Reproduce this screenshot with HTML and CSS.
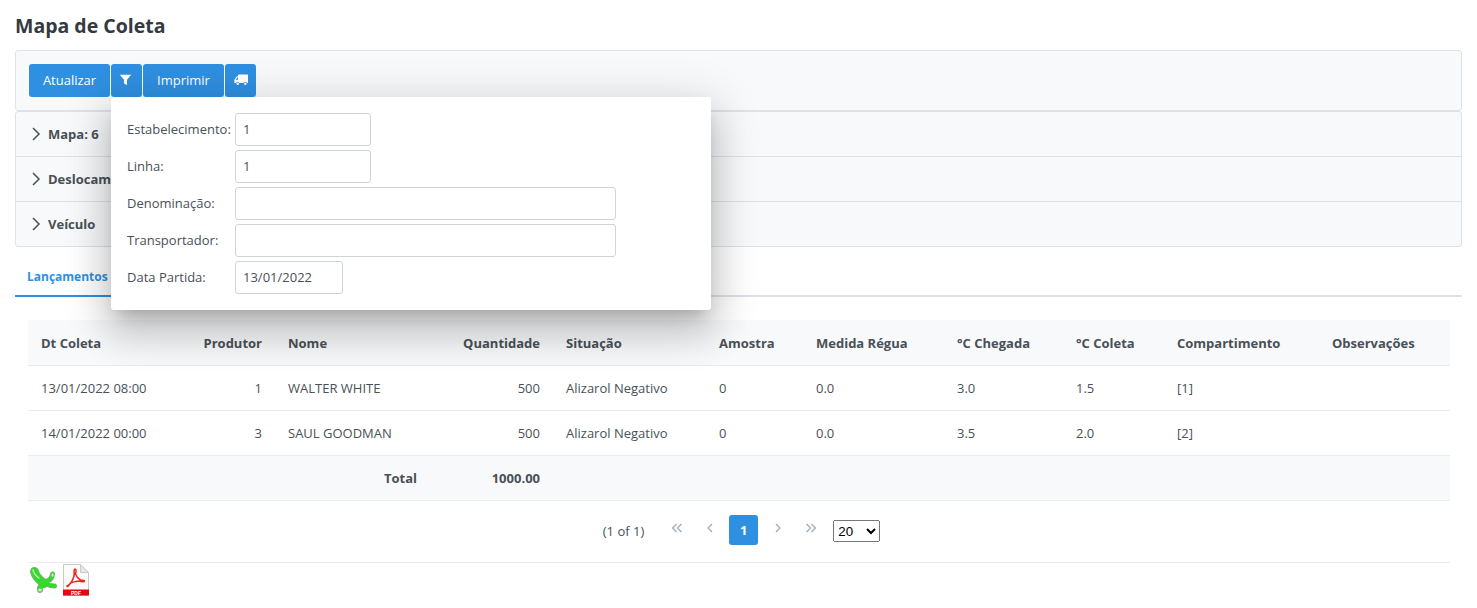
FILE: index.html
```html
<!DOCTYPE html>
<html lang="pt-BR">
<head>
    <meta charset="UTF-8">
    <meta name="viewport" content="width=device-width, initial-scale=1.0">
    <title>Mapa de Coleta</title>
    <link rel="stylesheet" href="styles.css">
</head>
<body>

<h1 class="page-title">Mapa de Coleta</h1>

<div class="toolbar">
    <button class="btn btn-text">Atualizar</button>
    <div class="filter-wrap">
        <button class="btn btn-icon" aria-label="Filtro">
            <svg width="13" height="13" viewBox="1 0 13 13"><path d="M.8 1.800h11.400L8 6.800V12L5 10.400V6.800z" fill="#fff"/></svg>
        </button>
        <div class="filter-panel">
            <div class="form-row">
                <label>Estabelecimento:</label>
                <input class="input-sm" type="text" value="1">
            </div>
            <div class="form-row">
                <label>Linha:</label>
                <input class="input-sm" type="text" value="1">
            </div>
            <div class="form-row">
                <label>Denominação:</label>
                <input class="input-lg" type="text">
            </div>
            <div class="form-row">
                <label>Transportador:</label>
                <input class="input-lg" type="text">
            </div>
            <div class="form-row">
                <label>Data Partida:</label>
                <input class="input-date" type="text" value="13/01/2022">
            </div>
        </div>
    </div>
    <button class="btn btn-text">Imprimir</button>
    <button class="btn btn-icon" aria-label="Transporte">
        <svg width="14" height="12" viewBox="0 0 14 12"><path d="M5 .500h8.300c.4 0 .7.300.7.700V9h-1.100a1.700 1.700 0 0 0-3.300 0H5.300a1.700 1.700 0 0 0-3.300 0H.3V5.800L2.300 3.100C2.700 2.500 3.100 2.300 4 2.300V1.500c0-.6.400-1 1-1zM1.700 5.700H4V3.400H3.300z" fill="#fff" fill-rule="evenodd"/><circle cx="3.700" cy="9.700" r="1.300" fill="#fff"/><circle cx="11.300" cy="9.700" r="1.300" fill="#fff"/></svg>
    </button>
</div>

<div class="accordion">
    <div class="acc-row">
        <svg class="chevron" width="10" height="14" viewBox="0 0 10 14"><path d="M2 1l6 6-6 6" fill="none" stroke="#495057" stroke-width="1.500"/></svg>
        <span>Mapa: 6</span>
    </div>
    <div class="acc-row">
        <svg class="chevron" width="10" height="14" viewBox="0 0 10 14"><path d="M2 1l6 6-6 6" fill="none" stroke="#495057" stroke-width="1.500"/></svg>
        <span>Deslocamento</span>
    </div>
    <div class="acc-row">
        <svg class="chevron" width="10" height="14" viewBox="0 0 10 14"><path d="M2 1l6 6-6 6" fill="none" stroke="#495057" stroke-width="1.500"/></svg>
        <span>Veículo</span>
    </div>
</div>

<div class="tabs">
    <a class="tab active">Lançamentos</a>
</div>

<div class="tab-content">
    <table class="data-table">
        <colgroup>
            <col class="c-data"><col class="c-prod"><col class="c-nome"><col class="c-qtd"><col class="c-sit">
            <col class="c-amo"><col class="c-med"><col class="c-che"><col class="c-col"><col class="c-comp"><col class="c-obs">
        </colgroup>
        <thead>
            <tr>
                <th>Dt Coleta</th>
                <th class="right">Produtor</th>
                <th>Nome</th>
                <th class="right">Quantidade</th>
                <th>Situação</th>
                <th>Amostra</th>
                <th>Medida Régua</th>
                <th>°C Chegada</th>
                <th>°C Coleta</th>
                <th>Compartimento</th>
                <th>Observações</th>
            </tr>
        </thead>
        <tbody>
            <tr>
                <td>13/01/2022 08:00</td>
                <td class="right">1</td>
                <td>WALTER WHITE</td>
                <td class="right">500</td>
                <td>Alizarol Negativo</td>
                <td>0</td>
                <td>0.0</td>
                <td>3.0</td>
                <td>1.5</td>
                <td>[1]</td>
                <td></td>
            </tr>
            <tr>
                <td>14/01/2022 00:00</td>
                <td class="right">3</td>
                <td>SAUL GOODMAN</td>
                <td class="right">500</td>
                <td>Alizarol Negativo</td>
                <td>0</td>
                <td>0.0</td>
                <td>3.5</td>
                <td>2.0</td>
                <td>[2]</td>
                <td></td>
            </tr>
        </tbody>
        <tfoot>
            <tr>
                <td class="right" colspan="3">Total</td>
                <td class="right">1000.00</td>
                <td colspan="7"></td>
            </tr>
        </tfoot>
    </table>

    <div class="paginator">
        <span class="page-info">(1 of 1)</span>
        <button class="page-link" aria-label="Primeira">
            <svg width="12" height="10" viewBox="0 0 12 10"><path d="M5.500 1L1.500 5l4 4M10.500 1l-4 4 4 4" fill="none" stroke="#a3acb5" stroke-width="1.300"/></svg>
        </button>
        <button class="page-link" aria-label="Anterior">
            <svg width="12" height="10" viewBox="0 0 12 10"><path d="M8 1L4 5l4 4" fill="none" stroke="#a3acb5" stroke-width="1.300"/></svg>
        </button>
        <button class="page-num">1</button>
        <button class="page-link" aria-label="Próxima">
            <svg width="12" height="10" viewBox="0 0 12 10"><path d="M4 1l4 4-4 4" fill="none" stroke="#a3acb5" stroke-width="1.300"/></svg>
        </button>
        <button class="page-link" aria-label="Última">
            <svg width="12" height="10" viewBox="0 0 12 10"><path d="M1.500 1l4 4-4 4M6.500 1l4 4-4 4" fill="none" stroke="#a3acb5" stroke-width="1.300"/></svg>
        </button>
        <select class="page-size">
            <option>20</option>
        </select>
    </div>

    <div class="exports">
        <svg class="icon-excel" width="30" height="30" viewBox="0 0 30 30">
            <g fill="none" stroke="#8aa886" stroke-linecap="round">
                <path d="M6.500 6.500C8 13 12 15 16 18.500" stroke-width="9"/>
                <path d="M16 17C20 16 24 15 24.500 9" stroke-width="5"/>
                <path d="M17 18C20 20 23 21 26.500 21" stroke-width="5"/>
                <path d="M15 18C14 21 11 22 12 25" stroke-width="6"/>
            </g>
            <g fill="none" stroke="#35d92b" stroke-linecap="round">
                <path d="M6.500 6.500C8 13 12 15 16 18.500" stroke-width="7.500"/>
                <path d="M16 17C20 16 24 15 24.500 9" stroke-width="3.800"/>
                <path d="M17 18C20 20 23 21 26.500 21" stroke-width="3.800"/>
                <path d="M15 18C14 21 11 22 12 25" stroke-width="4.500"/>
            </g>
            <path d="M5 5c1 4 3 6 6 8" fill="none" stroke="#b5f5ad" stroke-width="1.500" stroke-linecap="round"/>
            <ellipse cx="12" cy="25" rx="1.800" ry="1.400" fill="#d8f8d4"/>
            <ellipse cx="24.500" cy="10" rx="1.100" ry="1.800" fill="#d8f8d4"/>
        </svg>
        <svg width="26" height="32" viewBox="0 0 26 32">
            <path d="M.5.500h17l8 8v23H.5z" fill="#fbfbfb" stroke="#c9c9c9"/>
            <path d="M17.500.500v8h8z" fill="#e6e6e6" stroke="#c9c9c9"/>
            <path d="M4 22c3-1 6-6 7-10 .5-3-.5-7 1-7s1 3 .5 5c1 3 3 5 5 6 2 0 4 0 4 1s-3 1-5 0c-3 0-6 1-9 2-2 3-3.500 4.500-3.500 3z" fill="none" stroke="#e8281d" stroke-width="1.500"/>
            <rect x="0" y="25.500" width="26" height="6" fill="#e30613"/>
            <text class="pdf-label" x="13" y="30.500">PDF</text>
        </svg>
    </div>
</div>

</body>
</html>
```

FILE: styles.css
```css
* {
    box-sizing: border-box;
}
body {
    font-family: "Open Sans", sans-serif;
    font-size: 13px;
    color: #495057;
    background-color: #fff;
    margin: 0;
    padding: 0 15px;
}
.page-title {
    font-size: 19.500px;
    line-height: 27px;
    font-weight: 700;
    color: #343a40;
    margin: 0;
    padding: 12px 0 11px;
}
.toolbar {
    display: flex;
    gap: 1px;
    height: 61px;
    padding: 13px;
    background: #f8f9fa;
    border: 1px solid #dee2e6;
    border-radius: 3px;
}
.btn {
    height: 33px;
    border: none;
    border-radius: 3px;
    background-color: #2f8fe0;
    color: #fff;
    font-family: inherit;
    font-size: 13px;
    padding: 0 0 2px;
    display: flex;
    align-items: center;
    justify-content: center;
}
.btn-text {
    width: 81px;
}
.btn-icon {
    width: 31px;
}
.filter-wrap {
    position: relative;
}
.filter-panel {
    position: absolute;
    top: 33px;
    left: 0;
    z-index: 10;
    width: 600px;
    padding: 16px;
    display: flex;
    flex-direction: column;
    gap: 4px;
    background: #fff;
    border-radius: 3px;
    box-shadow: 0 11px 15px -7px rgba(0, 0, 0, 0.2), 0 24px 38px 3px rgba(0, 0, 0, 0.14), 0 9px 46px 8px rgba(0, 0, 0, 0.12);
}
.form-row {
    display: flex;
    align-items: center;
}
.form-row label {
    width: 108px;
    padding-bottom: 2px;
}
.form-row input {
    height: 33px;
    padding: 0 7px 2px;
    border: 1px solid #ced4da;
    border-radius: 3px;
    font-family: inherit;
    font-size: 13px;
    color: #495057;
}
.input-sm {
    width: 136px;
}
.input-lg {
    width: 381px;
}
.input-date {
    width: 108px;
}
.accordion {
    border: 1px solid #dee2e6;
    border-radius: 3px;
    background: #f8f9fa;
}
.acc-row {
    display: flex;
    align-items: center;
    gap: 7px;
    height: 45px;
    padding-left: 15px;
    font-weight: 700;
    border-bottom: 1px solid #dee2e6;
}
.acc-row:last-child {
    border-bottom: none;
    height: 44px;
}
.tabs {
    height: 49px;
    margin-top: 1px;
    display: flex;
    align-items: flex-end;
    border-bottom: 2px solid #dee2e6;
}
.tab {
    width: 130px;
    height: 33px;
    margin-bottom: -2px;
    padding: 4px 0 0 12px;
    font-size: 12px;
    font-weight: 700;
    color: #2f8fe0;
    border-bottom: 2px solid #2f8fe0;
}
.tab-content {
    padding: 23px 12px 0 13px;
}
.data-table {
    width: 1422px;
    table-layout: fixed;
    border-collapse: collapse;
}
.c-data { width: 124px; }
.c-prod { width: 123px; }
.c-nome { width: 155px; }
.c-qtd { width: 123px; }
.c-sit { width: 153px; }
.c-amo { width: 97px; }
.c-med { width: 141px; }
.c-che { width: 119px; }
.c-col { width: 101px; }
.c-comp { width: 155px; }
.c-obs { width: 131px; }
.data-table th, .data-table td {
    height: 45px;
    padding: 0 13px;
    text-align: left;
    border-bottom: 1px solid #e9ecef;
    white-space: nowrap;
}
.data-table th {
    background: #f8f9fa;
    font-weight: 700;
    padding-top: 2px;
}
.data-table tfoot td {
    background: #f8f9fa;
    font-weight: 700;
}
.data-table .right {
    text-align: right;
}
.paginator {
    height: 62px;
    display: flex;
    align-items: center;
    justify-content: center;
    border-bottom: 1px solid #e9ecef;
    padding: 0 0 3px 5px;
}
.page-info {
    margin-right: 16px;
    padding-top: 3px;
}
.page-link {
    width: 33px;
    height: 29px;
    border: none;
    background: none;
    padding: 0 0 4px;
    display: flex;
    align-items: center;
    justify-content: center;
}
.page-num {
    width: 29px;
    height: 30px;
    border: none;
    border-radius: 3px;
    background-color: #2f8fe0;
    color: #fff;
    font-family: inherit;
    font-size: 13px;
    font-weight: 700;
    margin: 0 3px;
}
.page-size {
    width: 47px;
    height: 22px;
    margin: 3px 0 0 6px;
    font-family: "Liberation Sans", sans-serif;
    font-size: 13.300px;
}
.exports {
    display: flex;
    align-items: flex-start;
    gap: 5px;
    padding-top: 1px;
}
.icon-excel {
    margin-top: 1px;
}
.pdf-label {
    font-family: "Liberation Sans", sans-serif;
    font-size: 5px;
    font-weight: 700;
    fill: #fff;
    text-anchor: middle;
}
```
